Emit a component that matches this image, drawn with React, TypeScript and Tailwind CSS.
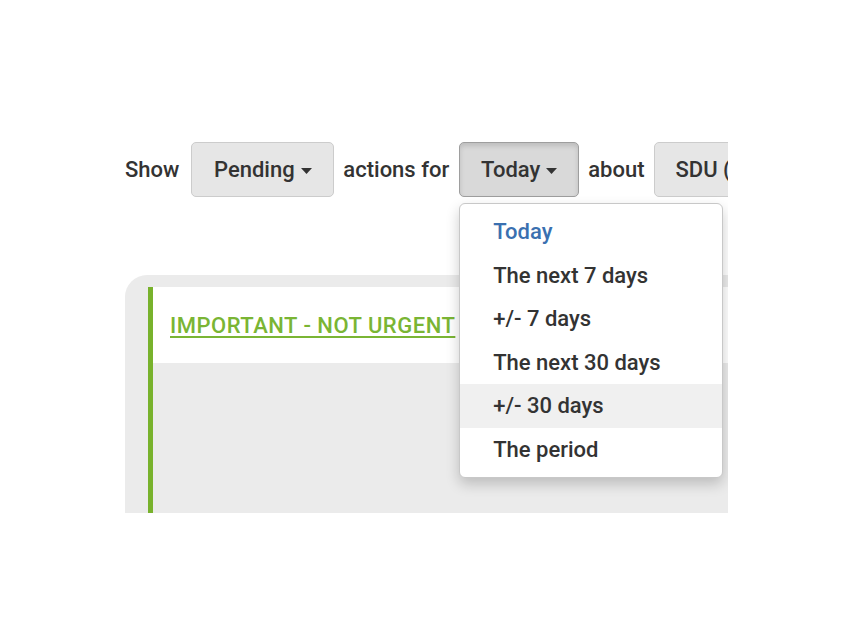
import React from 'react';

const font = { fontFamily: 'Roboto, "Liberation Sans", sans-serif' };

function Caret() {
  return (
    <svg className="ml-[6px] mt-[2px] shrink-0" width="11" height="6" viewBox="0 0 11 6">
      <path d="M0 0h11L5.5 6z" fill="#333" />
    </svg>
  );
}

const periods = ['Today', 'The next 7 days', '+/- 7 days', 'The next 30 days', '+/- 30 days', 'The period'];

export default function App() {
  return (
    <div className="w-[850px] h-[638px] bg-white overflow-hidden" style={font}>
      {/* cropped view of the actions page */}
      <div className="ml-[125px] pt-[142px] w-[603px] h-[513px] overflow-hidden">
        <div className="relative flex items-center h-[55px] text-[22px] font-medium text-[#333] whitespace-nowrap">
          <span className="shrink-0">Show</span>
          <button className="shrink-0 ml-[12px] h-[55px] w-[143px] flex items-center justify-center rounded-[5px] border border-[#cccccc] bg-[#e6e6e6] text-[#333]">
            Pending
            <Caret />
          </button>
          <span className="shrink-0 ml-[9px]">actions for</span>
          <div className="relative shrink-0 ml-[10px]">
            <button className="h-[55px] w-[120px] flex items-center justify-center rounded-[5px] border border-[#9e9e9e] bg-[#d9d9d9] text-[#333] shadow-[inset_0_3px_5px_rgba(0,0,0,0.13)]">
              Today
              <Caret />
            </button>
            {/* Dropdown */}
            <ul className="absolute left-0 top-[61px] z-10 w-[264px] py-[6px] bg-white border border-[#c8c8c8] rounded-[6px] shadow-[0_6px_14px_rgba(0,0,0,0.2)]">
              {periods.map((p, i) => (
                <li
                  key={p}
                  className={`h-[43.5px] flex items-center pl-[33px] ${
                    i === 0 ? 'text-[#3a70b0]' : 'text-[#333]'
                  } ${i === 4 ? 'bg-[#f0f0f0]' : ''}`}
                >
                  {p}
                </li>
              ))}
            </ul>
          </div>
          <span className="shrink-0 ml-[9px]">about</span>
          <button className="shrink-0 ml-[10px] h-[55px] w-[140px] flex items-center pl-[20px] rounded-[5px] border border-[#cccccc] bg-[#e6e6e6] text-[#333]">
            SDU (all)
            <Caret />
          </button>
        </div>

        {/* Panel */}
        <div className="mt-[78px] h-[300px] bg-[#ebebeb] rounded-tl-[22px] pt-[12px] pl-[23px]">
          <div className="h-full border-l-[5px] border-[#78b22c]">
            <div className="h-[76px] bg-white flex items-center pl-[17px]">
              <a className="text-[22px] font-medium tracking-[0.5px] text-[#7ab534] underline underline-offset-[3px]" href="#">
                IMPORTANT - NOT URGENT
              </a>
            </div>
          </div>
        </div>
      </div>
    </div>
  );
}
